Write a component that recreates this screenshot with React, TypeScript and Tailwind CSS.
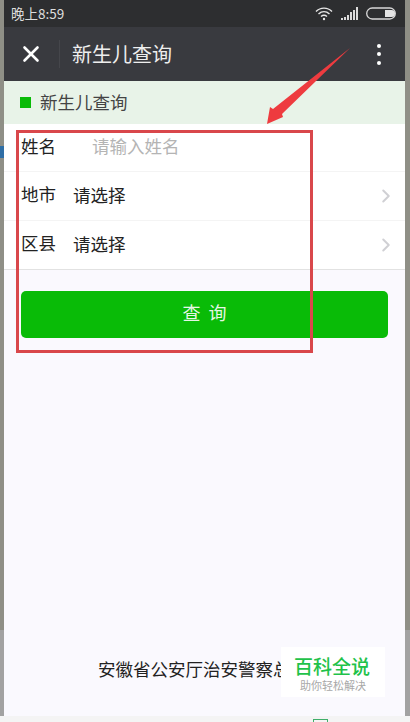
import React from "react";
import { ChevronRight, X } from "lucide-react";

const cjk = "font-['Noto_Sans_CJK_SC','Noto_Sans',sans-serif]";

const WifiIcon = () => (
  <svg width="18" height="15" viewBox="0 0 18 15" fill="none" stroke="#e8e8e8" strokeWidth="1.4">
    <path d="M1 5.5C5.5 1 12.5 1 17 5.5" />
    <path d="M3.5 8C6.8 5 11.2 5 14.5 8" />
    <path d="M6 10.5C7.8 9 10.2 9 12 10.5" />
    <circle cx="9" cy="13" r="1.2" fill="#e8e8e8" stroke="none" />
  </svg>
);

const SignalIcon = () => (
  <svg width="17" height="13" viewBox="0 0 17 13" fill="#dcdcdc">
    <rect x="0" y="11" width="2" height="2" />
    <rect x="3" y="10" width="2" height="3" />
    <rect x="6" y="8" width="2" height="5" />
    <rect x="9" y="5" width="2" height="8" />
    <rect x="12" y="3" width="2" height="10" />
    <rect x="15" y="0" width="2" height="13" />
  </svg>
);

const BatteryIcon = () => (
  <svg width="31" height="13" viewBox="0 0 31 13" fill="none">
    <rect x="0.7" y="1" width="28.6" height="11" rx="5.5" stroke="#d8d8d8" strokeWidth="1.3" />
    <path d="M19 3h6.5a3.5 3.5 0 0 1 0 7H19z" fill="#e4e4e4" />
  </svg>
);

const Row = ({ label, value, last }: { label: string; value: string; last?: boolean }) => (
  <div
    className={
      last
        ? "flex h-[48px] items-center pl-[17px] pr-[8px]"
        : "flex h-[49px] items-center border-b border-[#f4f4f4] pl-[17px] pr-[8px]"
    }
  >
    <span className="mb-[4px] w-[52px] text-[17.5px] text-[#222]">{label}</span>
    <span className="mb-[2px] flex-1 text-[17.5px] text-[#222]">{value}</span>
    <ChevronRight size={22} strokeWidth={2.2} className="text-[#d0d0d4]" />
  </div>
);

export default function App() {
  return (
    <div className={`relative h-[722px] w-[410px] overflow-hidden bg-[#8f8f86] ${cjk}`}>
      <div className="relative z-10 ml-[4px] flex h-[716px] w-[401px] flex-col bg-[#faf9fe]">
        {/* status bar */}
        <div className="flex h-[27px] items-center justify-between bg-[#2d2e30] pl-[7px] pr-[8px]">
          <span className="text-[13.5px] text-[#dddddd]">晚上8:59</span>
          <div className="flex items-center gap-[8px]">
            <WifiIcon />
            <SignalIcon />
            <BatteryIcon />
          </div>
        </div>

        {/* nav */}
        <div className="flex h-[54px] items-center bg-[#393a3f]">
          <X size={26} strokeWidth={2.4} className="ml-[14px] text-white" />
          <div className="ml-[15px] h-[28px] w-px bg-[#45464b]" />
          <span className="ml-[12px] text-[20px] text-[#eeeeee]">新生儿查询</span>
          <div className="ml-auto mr-[24px] flex flex-col gap-[4.5px]">
            <span className="h-[4px] w-[4px] rounded-full bg-white" />
            <span className="h-[4px] w-[4px] rounded-full bg-white" />
            <span className="h-[4px] w-[4px] rounded-full bg-white" />
          </div>
        </div>

        {/* section title */}
        <div className="flex h-[43px] items-center bg-[#e8f3e8] pl-[16px] pb-[1px]">
          <span className="h-[11px] w-[11px] bg-[#09bb07]" />
          <span className="ml-[9px] text-[17.5px] text-[#444]">新生儿查询</span>
        </div>

        {/* form */}
        <div className="border-b border-[#e2e2e2] bg-white">
          <div className="flex h-[48px] items-center border-b border-[#f4f4f4] pl-[17px] pb-[3px]">
            <span className="w-[71px] text-[17.5px] text-[#222]">姓名</span>
            <span className="text-[17.5px] text-[#b4b4b4]">请输入姓名</span>
          </div>
          <Row label="地市" value="请选择" />
          <Row label="区县" value="请选择" last />
        </div>

        <div className="mx-[17px] mt-[21px] flex h-[47px] items-center justify-center rounded-[5px] bg-[#09bb07] pb-[4px] pl-[8px] text-[18px] tracking-[8px] text-[#e6f7e6]">
          查询
        </div>

        <div className="mt-auto mb-[34px] ml-[94px] text-[17.5px] whitespace-nowrap text-[#222]">
          安徽省公安厅治安警察总队
        </div>
      </div>

      {/* page behind the phone */}
      <div className="absolute bottom-0 left-0 h-[6px] w-full bg-[#f4f4f4]" />
      <div className="absolute top-[146px] left-0 h-[12px] w-[4px] bg-[#2f6ea5]" />
      <div className="absolute top-[630px] left-0 h-[86px] w-[4px] bg-[#a2a2a2]" />
      <div className="absolute top-[630px] right-0 h-[86px] w-[5px] bg-[#a2a2a2]" />
      <div className="absolute bottom-0 left-[313px] h-[3px] w-[15px] border-x border-t border-[#3fae6a]" />

      {/* watermark */}
      <div className="absolute top-[647px] left-[281px] z-20 flex h-[50px] w-[104px] flex-col items-center bg-white pt-[7px]">
        <span className="-ml-[2px] text-[19px] leading-[24px] font-medium text-[#1fc24a]">百科全说</span>
        <span className="text-[11px] leading-[14px] text-[#a8a8a8]">助你轻松解决</span>
      </div>

      {/* annotation box */}
      <div className="absolute top-[130px] left-[16px] z-20 h-[223px] w-[297px] border-[3px] border-[#d9474b]" />

      {/* annotation arrow */}
      <svg className="absolute top-[45px] left-[262px] z-20" width="92" height="82" viewBox="0 0 92 82">
        <path d="M88 3L20 69L21 72L5 79L8 62L11 64Z" fill="#ee3b3f" />
      </svg>
    </div>
  );
}
